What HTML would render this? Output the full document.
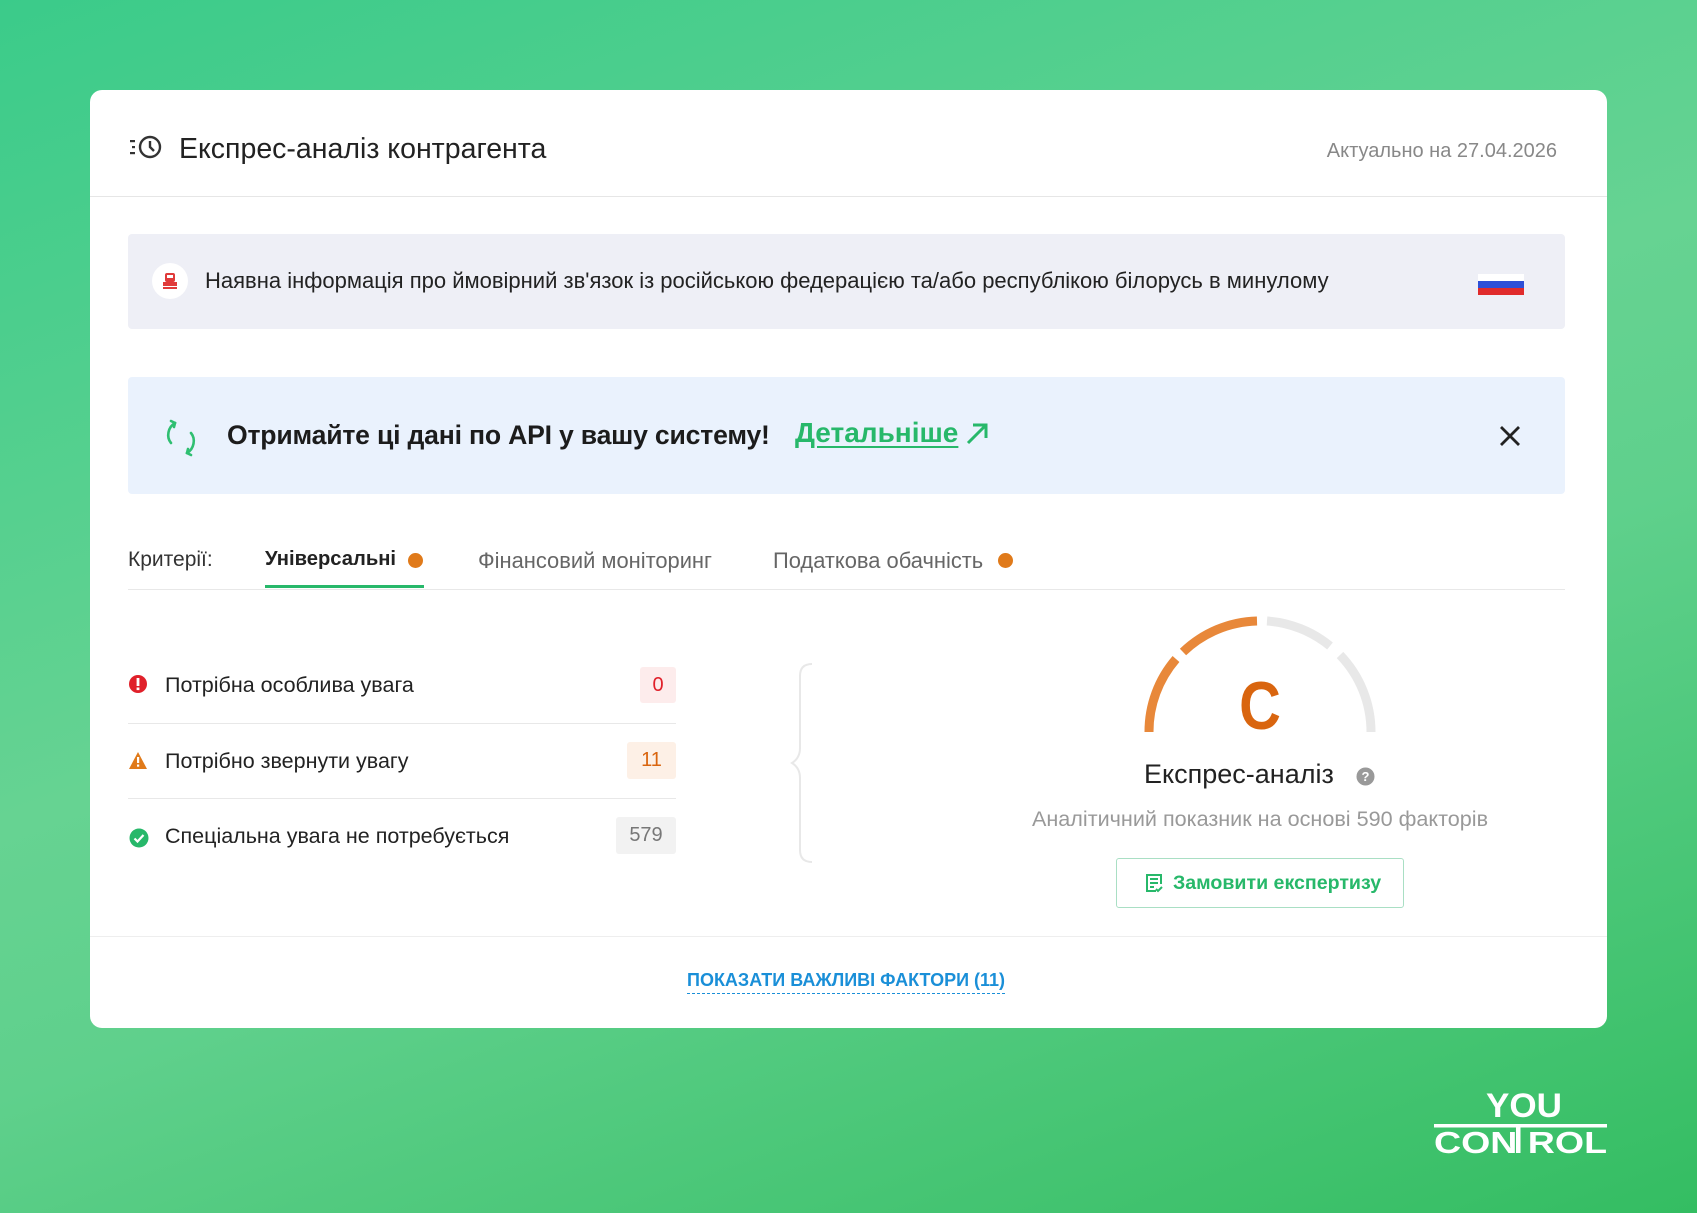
<!DOCTYPE html>
<html><head><meta charset="utf-8"><style>
*{margin:0;padding:0;box-sizing:border-box}
body{width:1697px;height:1213px;overflow:hidden;font-family:"Liberation Sans",sans-serif;background:linear-gradient(160deg,#3bcb8a 0%,#66d392 45%,#5fd08c 60%,#34bd62 100%);position:relative}
.card{position:absolute;left:90px;top:90px;width:1517px;height:938px;background:#fff;border-radius:12px}
.abs{position:absolute}
.t{white-space:nowrap}
</style></head><body>
<div class="card">
 <svg class="abs" style="left:38px;top:44px" width="36" height="28" viewBox="0 0 36 28"><g fill="none" stroke="#333" stroke-width="2.4"><circle cx="22" cy="13" r="10"/><path d="M22 7v6l4 4"/></g><g fill="#333"><rect x="2" y="6" width="5" height="2.2"/><rect x="4" y="12" width="3" height="2.2"/><rect x="2" y="18" width="5" height="2.2"/></g></svg>
 <div class="abs t" style="left:89px;top:43px;font-size:28.5px;color:#222">Експрес-аналіз контрагента</div>
 <div class="abs t" style="right:50px;top:50px;font-size:20px;color:#888">Актуально на 27.04.2026</div>
 <div class="abs" style="left:0;top:106px;width:100%;height:1px;background:#e6e6e6"></div>

 <div class="abs" style="left:38px;top:144px;width:1437px;height:95px;background:#eeeff6;border-radius:4px">
  <div class="abs" style="left:24px;top:29px;width:36px;height:36px;border-radius:50%;background:#fff"></div>
  <svg class="abs" style="left:34px;top:38px" width="16" height="18" viewBox="0 0 16 18"><rect x="3" y="1" width="10" height="9" rx="2" fill="#e03a3a"/><rect x="5" y="3" width="6" height="3" fill="#fff"/><rect x="1" y="10" width="14" height="4" fill="#e03a3a"/><rect x="1" y="15" width="14" height="2" fill="#e03a3a"/></svg>
  <div class="abs t" style="left:77px;top:34px;font-size:22px;color:#222">Наявна інформація про ймовірний зв'язок із російською федерацією та/або республікою білорусь в минулому</div>
  <div class="abs" style="left:1350px;top:40px;width:46px;height:7px;background:#fff"></div>
  <div class="abs" style="left:1350px;top:47px;width:46px;height:7px;background:#2e4fd6"></div>
  <div class="abs" style="left:1350px;top:54px;width:46px;height:7px;background:#e02b2b"></div>
 </div>

 <div class="abs" style="left:38px;top:287px;width:1437px;height:117px;background:#eaf2fd;border-radius:4px">
  <svg class="abs" style="left:33px;top:40px" width="40" height="42" viewBox="0 0 40 42"><g fill="none" stroke="#2fbf71" stroke-width="2.6" stroke-linecap="round"><path d="M14 6C7 10 5 20 10 26"/><path d="M10 4l4 2-1 4"/><path d="M26 36c7-4 9-14 4-20"/><path d="M30 38l-4-2 1-4"/></g></svg>
  <div class="abs t" style="left:99px;top:43px;font-size:26.6px;font-weight:bold;color:#1c1c1c;letter-spacing:-0.2px">Отримайте ці дані по API у вашу систему!</div>
  <div class="abs t" style="left:667px;top:40px;font-size:28px;font-weight:bold;color:#27b86a;text-decoration:underline;text-underline-offset:4px">Детальніше</div>
  <svg class="abs" style="left:836px;top:44px" width="26" height="26" viewBox="0 0 26 26"><path d="M4 22L21 5M9 4h13v13" fill="none" stroke="#27b86a" stroke-width="3"/></svg>
  <svg class="abs" style="left:1370px;top:47px" width="24" height="24" viewBox="0 0 24 24"><path d="M3 3l18 18M21 3L3 21" stroke="#222" stroke-width="2.8"/></svg>
 </div>

 <div class="abs t" style="left:38px;top:458px;font-size:21px;color:#333">Критерії:</div>
 <div class="abs t" style="left:175px;top:458px;font-size:20.2px;color:#222;font-weight:bold">Універсальні</div>
 <div class="abs" style="left:318px;top:463px;width:15px;height:15px;border-radius:50%;background:#e07a1a"></div>
 <div class="abs" style="left:175px;top:495px;width:159px;height:3px;background:#27b86a"></div>
 <div class="abs t" style="left:388px;top:458px;font-size:21.9px;color:#666">Фінансовий моніторинг</div>
 <div class="abs t" style="left:683px;top:458px;font-size:21.9px;color:#666">Податкова обачність</div>
 <div class="abs" style="left:908px;top:463px;width:15px;height:15px;border-radius:50%;background:#e07a1a"></div>
 <div class="abs" style="left:38px;top:499px;width:1437px;height:1px;background:#e8e8e8"></div>

 <svg class="abs" style="left:38px;top:584px" width="20" height="20" viewBox="0 0 20 20"><circle cx="10" cy="10" r="9" fill="#e0202a"/><rect x="8.6" y="4" width="2.8" height="8" fill="#fff"/><rect x="8.6" y="13.5" width="2.8" height="2.6" fill="#fff"/></svg>
 <div class="abs t" style="left:75px;top:583px;font-size:21.5px;color:#222">Потрібна особлива увага</div>
 <div class="abs" style="left:550px;top:577px;width:36px;height:36px;background:#fdecec;border-radius:3px;color:#e0202a;font-size:20px;text-align:center;line-height:36px">0</div>
 <div class="abs" style="left:38px;top:633px;width:548px;height:1px;background:#e8e8e8"></div>
 <svg class="abs" style="left:38px;top:661px" width="20" height="19" viewBox="0 0 20 19"><path d="M10 1L19 18H1z" fill="#e07a1a"/><rect x="9" y="6" width="2.2" height="6" fill="#fff"/><rect x="9" y="13.5" width="2.2" height="2.2" fill="#fff"/></svg>
 <div class="abs t" style="left:75px;top:659px;font-size:21.5px;color:#222">Потрібно звернути увагу</div>
 <div class="abs" style="left:537px;top:652px;width:49px;height:37px;background:#fdf0e6;border-radius:3px;color:#d9650f;font-size:20px;text-align:center;line-height:37px">11</div>
 <div class="abs" style="left:38px;top:708px;width:548px;height:1px;background:#e8e8e8"></div>
 <svg class="abs" style="left:39px;top:738px" width="20" height="20" viewBox="0 0 20 20"><circle cx="10" cy="10" r="9.5" fill="#27b86a"/><path d="M5.5 10.5l3 3 6-6.5" fill="none" stroke="#fff" stroke-width="2.2"/></svg>
 <div class="abs t" style="left:75px;top:734px;font-size:21.5px;color:#222">Спеціальна увага не потребується</div>
 <div class="abs" style="left:526px;top:727px;width:60px;height:37px;background:#f2f2f2;border-radius:3px;color:#777;font-size:20px;text-align:center;line-height:37px">579</div>

 <svg class="abs" style="left:700px;top:572px" width="26" height="202" viewBox="0 0 26 202"><path d="M22 2Q10 2 10 14V86Q10 96 2 101Q10 106 10 116V188Q10 200 22 200" fill="none" stroke="#e8e8e8" stroke-width="2"/></svg>

 <svg class="abs" style="left:1050px;top:520px" width="240" height="135" viewBox="0 0 240 135">
  <g fill="none" stroke-width="9" transform="translate(120,122)">
   <path d="M-111 0A111 111 0 0 1 -84 -73" stroke="#e8883a"/>
   <path d="M-77 -80A111 111 0 0 1 -3 -111" stroke="#e8883a"/>
   <path d="M7 -111A111 111 0 0 1 70 -86" stroke="#e8e8e8"/>
   <path d="M80 -77A111 111 0 0 1 111 0" stroke="#e8e8e8"/>
  </g>
 </svg>
 <div class="abs t" style="left:1120px;top:582px;width:100px;text-align:center;font-size:68px;line-height:1;font-weight:bold;color:#d9650f;transform:scaleX(0.85)">C</div>
 <div class="abs t" style="left:1054px;top:669px;font-size:27px;color:#222">Експрес-аналіз</div>
 <svg class="abs" style="left:1266px;top:677px" width="19" height="19" viewBox="0 0 19 19"><circle cx="9.5" cy="9.5" r="9" fill="#999"/><text x="9.5" y="14" font-size="13" font-weight="bold" fill="#fff" text-anchor="middle" font-family="Liberation Sans">?</text></svg>
 <div class="abs t" style="left:870px;top:716px;width:600px;text-align:center;font-size:21.6px;color:#999">Аналітичний показник на основі 590 факторів</div>
 <div class="abs" style="left:1026px;top:768px;width:288px;height:50px;border:1px solid #a9dfc4;border-radius:3px"></div>
 <svg class="abs" style="left:1054px;top:783px" width="20" height="20" viewBox="0 0 20 20"><g fill="none" stroke="#27b86a" stroke-width="2"><path d="M12 18H3V2h14v9"/><path d="M6 6h8M6 10h8M6 14h4"/><path d="M12 16l2 2 4-4"/></g></svg>
 <div class="abs t" style="left:1083px;top:782px;font-size:19.6px;font-weight:bold;color:#27b86a">Замовити експертизу</div>

 <div class="abs" style="left:0;top:846px;width:100%;height:1px;background:#eeeeee"></div>
 <div class="abs t" style="left:597px;top:880px;font-size:18px;font-weight:bold;color:#1a8fd8;border-bottom:1.5px dashed #1a8fd8;padding-bottom:2px">ПОКАЗАТИ ВАЖЛИВІ ФАКТОРИ (11)</div>
</div>

<svg class="abs" style="left:1430px;top:1084px" width="180" height="74" viewBox="0 0 180 74">
 <text x="56" y="33" font-family="Liberation Sans" font-weight="bold" font-size="34" fill="#fff" textLength="76" lengthAdjust="spacingAndGlyphs">YOU</text>
 <rect x="4" y="40" width="173" height="3.5" fill="#fff"/>
 <text x="4" y="69" font-family="Liberation Sans" font-weight="bold" font-size="31" fill="#fff" textLength="173" lengthAdjust="spacingAndGlyphs">CON  ROL</text>
 <rect x="86" y="40" width="4.5" height="29" fill="#fff"/>
</svg>
</body></html>
